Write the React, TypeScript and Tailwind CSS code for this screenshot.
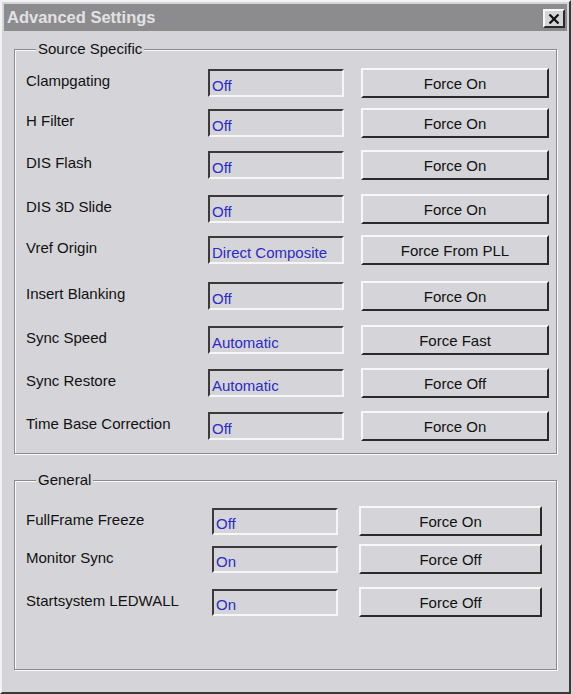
import React from 'react';

interface SettingRow {
  label: string;
  value: string;
  action: string;
  gap: string;
}

const sourceRows: SettingRow[] = [
  { label: 'Clampgating', value: 'Off', action: 'Force On', gap: 'mt-[10px]' },
  { label: 'H Filter', value: 'Off', action: 'Force On', gap: 'mt-[10px]' },
  { label: 'DIS Flash', value: 'Off', action: 'Force On', gap: 'mt-[12px]' },
  { label: 'DIS 3D Slide', value: 'Off', action: 'Force On', gap: 'mt-[14px]' },
  { label: 'Vref Origin', value: 'Direct Composite', action: 'Force From PLL', gap: 'mt-[11px]' },
  { label: 'Insert Blanking', value: 'Off', action: 'Force On', gap: 'mt-[16px]' },
  { label: 'Sync Speed', value: 'Automatic', action: 'Force Fast', gap: 'mt-[14px]' },
  { label: 'Sync Restore', value: 'Automatic', action: 'Force Off', gap: 'mt-[13px]' },
  { label: 'Time Base Correction', value: 'Off', action: 'Force On', gap: 'mt-[13px]' },
];

const generalRows: SettingRow[] = [
  { label: 'FullFrame Freeze', value: 'Off', action: 'Force On', gap: 'mt-[17px]' },
  { label: 'Monitor Sync', value: 'On', action: 'Force Off', gap: 'mt-[8px]' },
  { label: 'Startsystem LEDWALL', value: 'On', action: 'Force Off', gap: 'mt-[13px]' },
];

// sunken read-only field + raised push button, win2k style
function Row({ row, general }: { row: SettingRow; general?: boolean }) {
  return (
    <div className={`flex items-center h-[30px] ${row.gap}`}>
      <div className={`${general ? 'w-[186px] pb-[4px]' : 'w-[182px] pb-[6px]'} text-[15px] text-[#111] leading-none`}>
        {row.label}
      </div>
      <div
        className={`${general ? 'w-[126px] h-[27px]' : 'w-[136px] h-[28px]'} flex items-center pl-[2px] pt-[4px] border-2 border-t-[#3a3a3a] border-l-[#3a3a3a] border-b-[#f6f6f6] border-r-[#f6f6f6] text-[15px] text-[#2b2bc6] leading-none`}
      >
        {row.value}
      </div>
      <button
        className={`${general ? 'ml-[21px] w-[183px]' : 'ml-[17px] w-[188px]'} h-[30px] flex items-center justify-center border-2 border-t-[#f8f8f8] border-l-[#f8f8f8] border-b-[#2a2a2a] border-r-[#2a2a2a] bg-[#d5d5d9] text-[15px] text-[#111] leading-none`}
      >
        {row.action}
      </button>
    </div>
  );
}

function GroupBox({ title, className, children }: { title: string; className: string; children: React.ReactNode }) {
  return (
    <fieldset
      className={`border border-[#8a8a8e] shadow-[inset_1px_1px_0_#fbfbfb,1px_1px_0_#fbfbfb] ${className}`}
    >
      <legend className="ml-[10px] px-[2px] bg-[#d5d5d9] text-[15px] leading-[18px] text-[#111]">{title}</legend>
      {children}
    </fieldset>
  );
}

export default function App() {
  return (
    <div className="w-[573px] h-[694px] bg-[#d5d5d9] font-['Liberation_Sans',Arial,sans-serif]">
      <div className="w-[571px] h-[694px] border-2 border-t-[#f2f2f2] border-l-[#f2f2f2] border-r-[#3a3a3a] border-b-[#3a3a3a] flex flex-col">
        {/* Title bar */}
        <div className="mx-[2px] mt-[2px] h-[27px] bg-[#8c8c8e] flex items-center justify-between pl-[3px] pr-[2px]">
          <span className="text-[16.5px] font-bold text-[#e2e2e2] leading-none">Advanced Settings</span>
          <button className="w-[22px] h-[19px] mt-[2px] flex items-center justify-center bg-[#d5d5d9] border-2 border-t-[#f8f8f8] border-l-[#f8f8f8] border-b-[#2a2a2a] border-r-[#2a2a2a]">
            <svg width="12" height="10" viewBox="0 0 12 10">
              <path d="M1.5 0.5 L10.5 9.5 M10.5 0.5 L1.5 9.5" stroke="#111" strokeWidth="2.2" />
            </svg>
          </button>
        </div>

        <div className="ml-[12px] mr-[12px] mt-[9px] flex flex-col">
          <GroupBox title="Source Specific" className="pl-[11px] pr-[7px] pb-[12px]">
            {sourceRows.map((r) => (
              <Row key={r.label} row={r} />
            ))}
          </GroupBox>

          <GroupBox title="General" className="mt-[17px] pl-[11px] pr-[7px] pb-[52px]">
            {generalRows.map((r) => (
              <Row key={r.label} row={r} general />
            ))}
          </GroupBox>
        </div>
      </div>
    </div>
  );
}
